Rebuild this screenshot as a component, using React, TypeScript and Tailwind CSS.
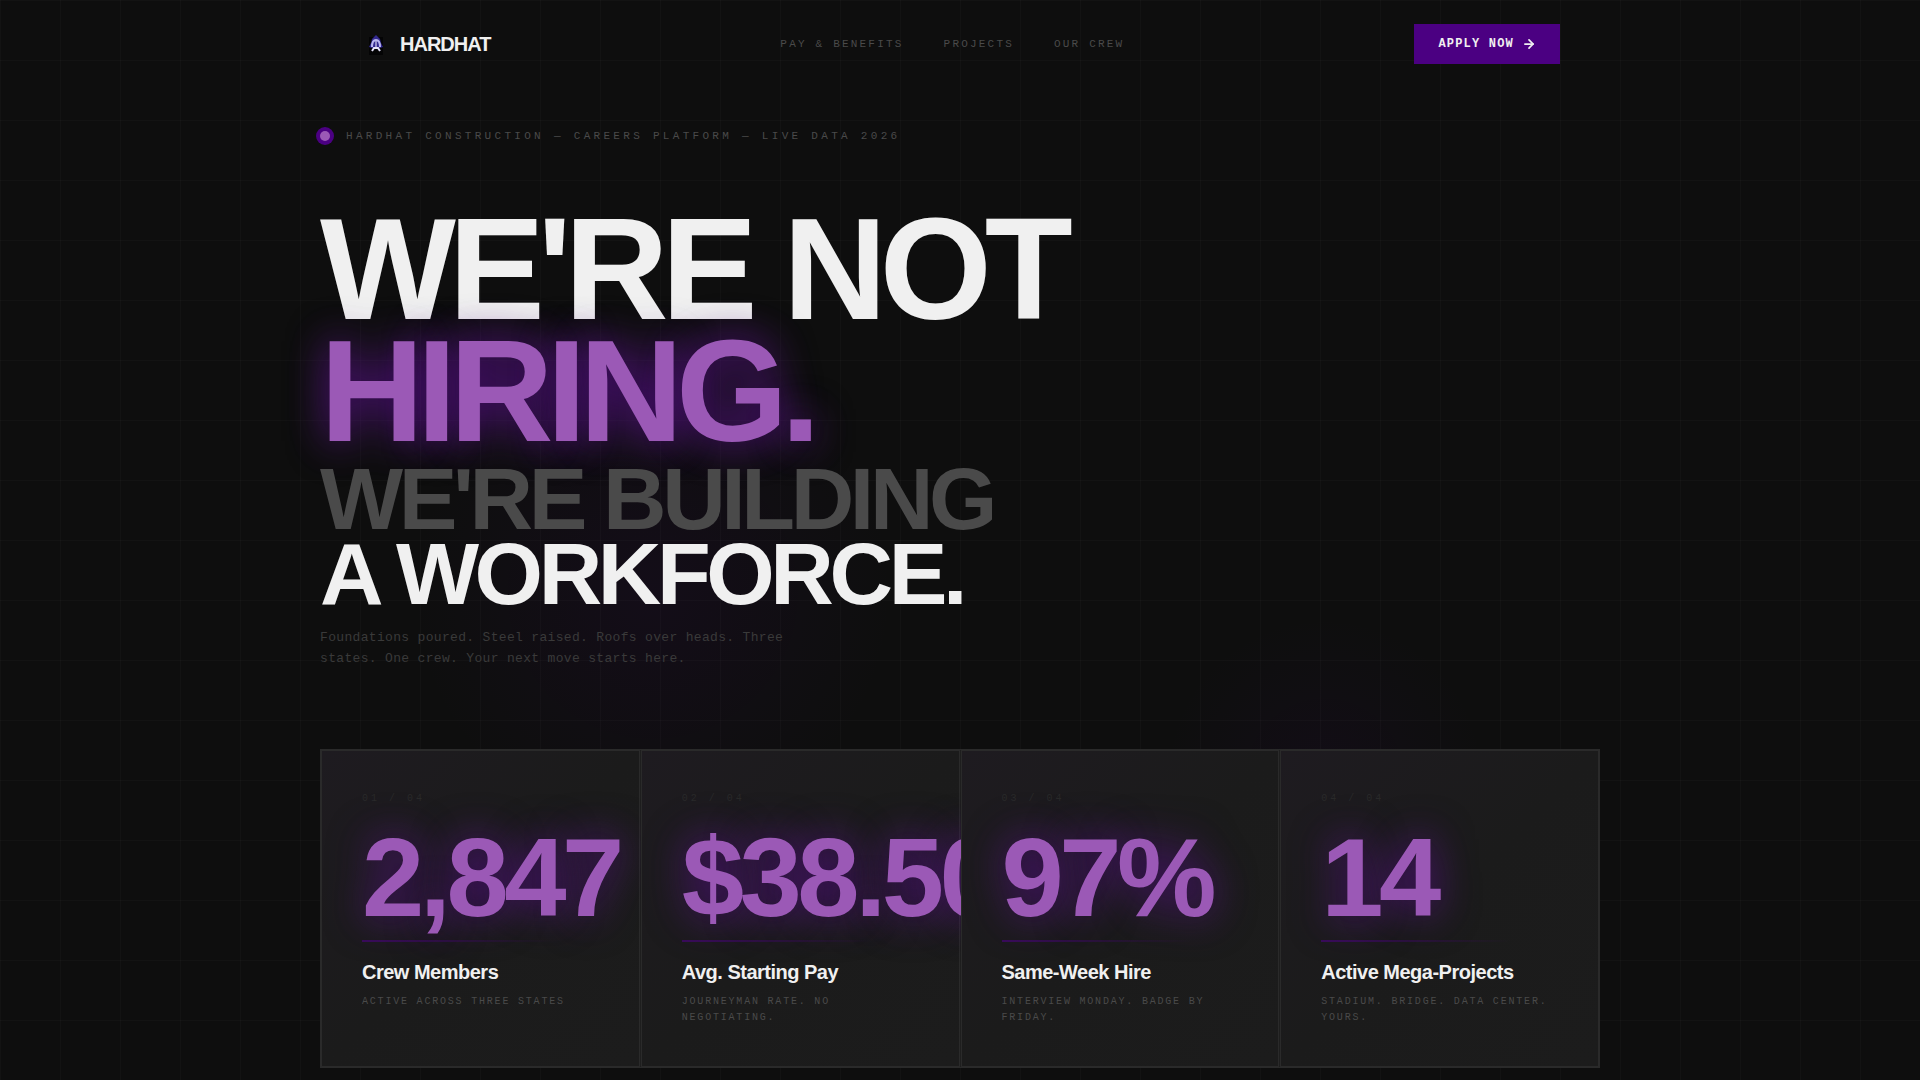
import { ArrowRight } from 'lucide-react';

const navLinks = [
  { label: 'Pay & Benefits', href: '#pay' },
  { label: 'Projects', href: '#projects' },
  { label: 'Our Crew', href: '#crew' },
];

const stats = [
  { index: '01 / 04', value: '2,847', label: 'Crew Members', note: 'Active across three states' },
  { index: '02 / 04', value: '$38.50', label: 'Avg. Starting Pay', note: 'Journeyman rate. No negotiating.' },
  { index: '03 / 04', value: '97%', label: 'Same-Week Hire', note: 'Interview Monday. Badge by Friday.' },
  { index: '04 / 04', value: '14', label: 'Active Mega-Projects', note: 'Stadium. Bridge. Data center. Yours.' },
];

const monoClassName = "font-['Liberation_Mono',monospace]";

function Logo() {
  return (
    <svg viewBox="0 0 32 32" className="h-8 w-8" aria-hidden="true">
      <path d="M9 9h14v18H9z" fill="#040405" />
      <path d="M16 7l4 4 1 4 2 4-3 1h-8l-3-1 2-4 1-4z" fill="#33298f" />
      <path d="M12 19c0-5 1-7 4-7s4 2 4 7" fill="none" stroke="#b9b6ee" strokeWidth="2" />
      <path d="M16 13v6" stroke="#f4f3ff" strokeWidth="1" />
      <path d="M12 23l2-3h4l2 3" fill="none" stroke="#e6e4fb" strokeWidth="2" />
    </svg>
  );
}

function Header() {
  return (
    <header className="mx-auto flex w-full max-w-[1280px] items-center justify-between px-10 py-6">
      <a href="#top" className="flex items-center gap-2 text-xl font-bold tracking-tighter text-[#f0f0f0]">
        <Logo />
        HARDHAT
      </a>
      <nav className={`flex gap-10 text-[11px] leading-4 tracking-[0.2em] text-[#4a4a4a] uppercase ${monoClassName}`}>
        {navLinks.map((link) => (
          <a key={link.href} href={link.href}>
            {link.label}
          </a>
        ))}
      </nav>
      <button
        type="button"
        className={`flex h-10 items-center gap-2 bg-[#4b0082] px-6 text-xs font-bold tracking-widest text-[#f0f0f0] uppercase ${monoClassName}`}
      >
        Apply Now
        <ArrowRight size={14} strokeWidth={3} />
      </button>
    </header>
  );
}

// Cards are positioned so that each one covers what spills out of the card before it.
function StatCard({ index, value, label, note }: (typeof stats)[number]) {
  return (
    <div className="relative min-w-0 border border-[#2a2a2a] bg-linear-to-br from-[#1e1b20] via-[#1b1b1b] to-[#1c1c1c] p-10">
      <p className={`text-[10px] leading-4 tracking-[0.3em] text-[#2a2a2a] ${monoClassName}`}>{index}</p>
      <p className="mt-5 text-[112px] leading-[101px] font-bold tracking-[-0.04em] text-[#9b59b6] text-shadow-[0_0_40px_rgba(75,0,130,0.7),0_0_40px_rgba(155,89,182,0.2)]">
        {value}
      </p>
      <div className="mt-3 h-[2px] bg-linear-to-r from-[#4b0082] to-transparent to-80% opacity-60" />
      <p className="mt-4 text-xl leading-7 font-bold tracking-tight text-[#f0f0f0]">{label}</p>
      <p className={`mt-2 text-[10px] leading-4 tracking-[0.18em] text-[#4a4a4a] uppercase ${monoClassName}`}>{note}</p>
    </div>
  );
}

export default function App() {
  return (
    <div
      id="top"
      className="min-h-screen overflow-hidden bg-[#0e0e0e] bg-[linear-gradient(rgba(255,255,255,0.02)_1px,transparent_1px),linear-gradient(90deg,rgba(255,255,255,0.02)_1px,transparent_1px)] bg-size-[60px_60px] font-['Liberation_Sans',sans-serif]"
    >
      <div className="min-h-screen bg-[radial-gradient(circle_at_34%_55%,rgba(75,0,130,0.09),transparent_240px),radial-gradient(circle_at_69%_72%,rgba(75,0,130,0.07),transparent_160px)]">
        <Header />
        <main className="mx-auto w-full max-w-[1280px] pt-10 pb-3">
          <div className="flex items-center gap-4">
            <span className="h-[10px] w-[10px] rounded-full bg-[#9b59b6] ring-4 ring-[#4b0082]" />
            <p className={`text-[11px] leading-4 tracking-[0.3em] text-[#4a4a4a] uppercase ${monoClassName}`}>
              Hardhat Construction — Careers Platform — Live Data 2026
            </p>
          </div>
          <h1 className="mt-[65px] font-bold text-[#f0f0f0]">
            <span className="block text-[144px] leading-[122px] tracking-tighter">WE'RE NOT</span>
            <span className="block text-[144px] leading-[122px] tracking-tighter text-[#9b59b6] text-shadow-[0_0_40px_rgba(75,0,130,0.8),0_0_40px_rgba(155,89,182,0.3)]">
              HIRING.
            </span>
            <span className="mt-2 block text-[88px] leading-[75px] tracking-tighter text-[#4a4a4a]">WE'RE BUILDING</span>
            <span className="block text-[88px] leading-[75px] tracking-tighter">A WORKFORCE.</span>
          </h1>
          <p className={`mt-4 max-w-[480px] text-[13px] leading-[21px] tracking-wide text-[#3a3a3a] ${monoClassName}`}>
            Foundations poured. Steel raised. Roofs over heads. Three states. One crew. Your next move starts here.
          </p>
          <section className="mt-20 grid grid-cols-4 gap-px border border-[#2a2a2a] bg-[#1e1e1e]">
            {stats.map((stat) => (
              <StatCard key={stat.index} {...stat} />
            ))}
          </section>
        </main>
      </div>
    </div>
  );
}
